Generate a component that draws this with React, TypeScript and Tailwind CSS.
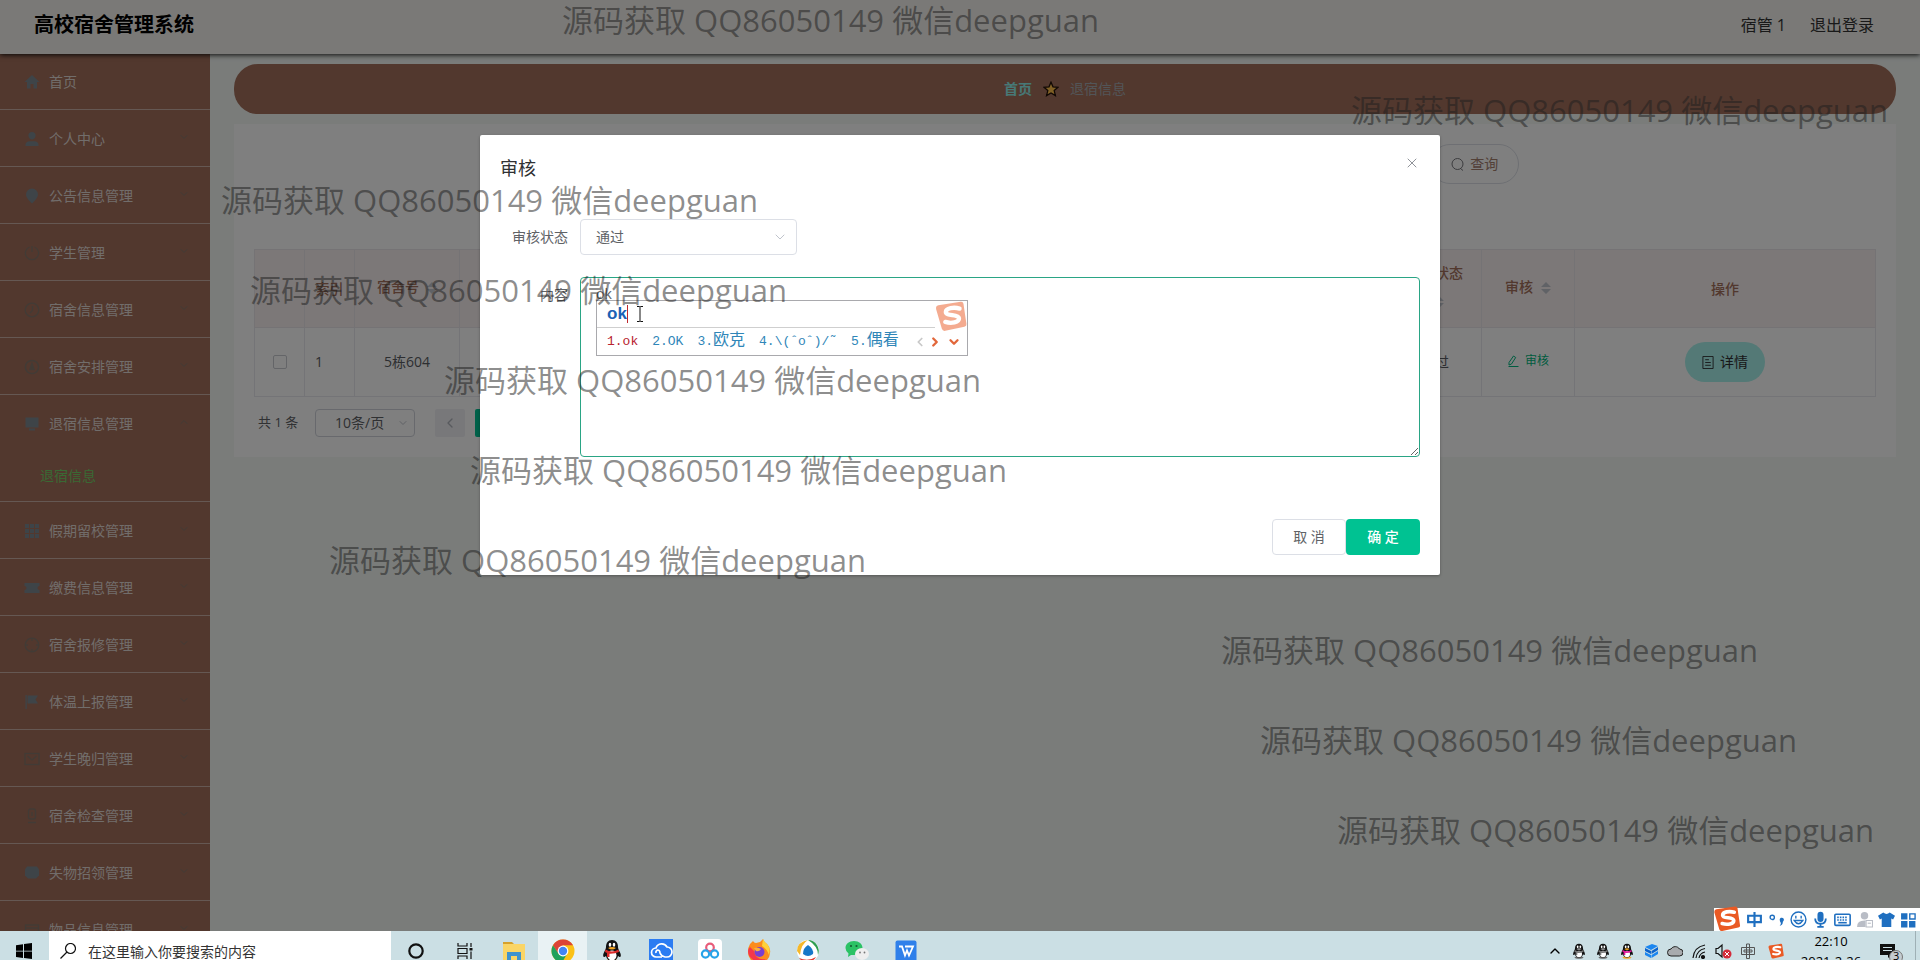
import React from "react";
import { ChevronDown, ChevronUp, ChevronLeft, ChevronRight, X } from "lucide-react";

type IconProps = { className?: string };

const menuIcons: Record<string, React.ReactNode> = {
  home: <path d="M8 1 0.5 8H3v6.500h3.500V10h3v4.500H13V8h2.500z" fill="currentColor" />,
  user: <path d="M8 1a3.600 3.600 0 0 1 3.600 3.600c0 2-1.600 4-3.600 4s-3.600-2-3.600-4A3.600 3.600 0 0 1 8 1zM1.500 15v-1.500c0-2 2-3.300 4-3.300h5c2 0 4 1.300 4 3.300V15z" fill="currentColor" />,
  pin: <path d="M8 .5a6 6 0 0 1 6 6c0 3.500-4 7-6 9-2-2-6-5.500-6-9a6 6 0 0 1 6-6z" fill="currentColor" />,
  power: (
    <g fill="none" stroke="currentColor" strokeWidth="1.300">
      <path d="M5.500 2A6.600 6.600 0 1 0 10.500 2" />
      <path d="M8 1v6" />
    </g>
  ),
  clock: (
    <g fill="none" stroke="currentColor" strokeWidth="1.300">
      <circle cx="8" cy="8" r="6.800" />
      <path d="M8.500 4v4.500L6 11" />
    </g>
  ),
  compass: (
    <g fill="none" stroke="currentColor" strokeWidth="1.500">
      <circle cx="8" cy="8" r="6.600" />
      <path d="M8 4.500 6 10.500h4z" fill="currentColor" />
    </g>
  ),
  monitor: <path d="M1.500 1.500h13v10h-13zM5 12.500h6v2H5z" fill="currentColor" />,
  grid: <path d="M1 1h4v4H1zM6 1h4v4H6zM11 1h4v4h-4zM1 6h4v4H1zM6 6h4v4H6zM11 6h4v4h-4zM1 11h4v4H1zM6 11h4v4H6zM11 11h4v4h-4z" fill="currentColor" />,
  ticket: <path d="M.5 3h15v3a2 2 0 0 0 0 4v3H.5v-3a2 2 0 0 0 0-4z" fill="currentColor" />,
  ball: (
    <g fill="none" stroke="currentColor" strokeWidth="1.300">
      <circle cx="8" cy="8" r="6.800" />
      <path d="M8 1v3M8 12v3M1 8h3M12 8h3" />
    </g>
  ),
  flag: <path d="M1.500 1h1.300v14H1.500zM3.500 1.500H14L11.500 5.500 14 9.500H3.500z" fill="currentColor" />,
  mail: (
    <g fill="none" stroke="currentColor" strokeWidth="1.300">
      <rect x="1" y="2.500" width="14" height="11" />
      <path d="M3.500 5 8 9l4.500-4" />
    </g>
  ),
  mic: (
    <g fill="none" stroke="currentColor" strokeWidth="1.300">
      <rect x="4.500" y="1" width="7" height="10" rx="2" />
      <path d="M4 14.500h8M8 4v4" />
    </g>
  ),
  chat: <path d="M3 1.500h10l2 3v6l-3 3H4l-3-3v-6z" fill="currentColor" />,
  goods: (
    <g fill="none" stroke="currentColor" strokeWidth="1.300">
      <rect x="1.500" y="3" width="13" height="11" />
      <path d="M1.500 6h13" />
    </g>
  ),
};

const menu = [
  { icon: "home", label: "首页", solid: true, leaf: true },
  { icon: "user", label: "个人中心", solid: true },
  { icon: "pin", label: "公告信息管理", solid: true },
  { icon: "power", label: "学生管理" },
  { icon: "clock", label: "宿舍信息管理" },
  { icon: "compass", label: "宿舍安排管理" },
  { icon: "monitor", label: "退宿信息管理", solid: true, child: "退宿信息" },
  { icon: "grid", label: "假期留校管理", solid: true },
  { icon: "ticket", label: "缴费信息管理", solid: true },
  { icon: "ball", label: "宿舍报修管理" },
  { icon: "flag", label: "体温上报管理", solid: true },
  { icon: "mail", label: "学生晚归管理" },
  { icon: "mic", label: "宿舍检查管理" },
  { icon: "chat", label: "失物招领管理", solid: true },
  { icon: "goods", label: "物品信息管理" },
];

function Sidebar() {
  return (
    <nav className="w-[210px] shrink-0 overflow-hidden bg-[#a4705c] text-sm text-[#e3dad6]">
      <ul>
        {menu.map((m) => (
          <li key={m.label} className="border-b border-[#cbb1a6]">
            <button type="button" className="flex h-14 w-full items-center pl-6 pr-5 pt-[2px]">
              <svg viewBox="0 0 16 16" className={m.solid ? "h-4 w-4 text-[#7c8890]" : "h-4 w-4 text-[#84776c]"}>
                {menuIcons[m.icon]}
              </svg>
              <span className="ml-[9px] flex-1 text-left">{m.label}</span>
              {!m.leaf &&
                (m.child ? (
                  <ChevronUp className="mb-1 h-3 w-3 text-[#84776c]" strokeWidth={2} />
                ) : (
                  <ChevronDown className="mb-1 h-3 w-3 text-[#84776c]" strokeWidth={2} />
                ))}
            </button>
            {m.child && (
              <a href="#checkout" className="flex h-[50px] items-center pl-10 text-[#74d268]">
                {m.child}
              </a>
            )}
          </li>
        ))}
      </ul>
    </nav>
  );
}

function SortCaret() {
  return (
    <svg viewBox="0 0 10 12" className="ml-2 inline-block h-3 w-[10px] align-[-2px] text-[#c0c4cc]">
      <path d="M5 0 10 5H0zM5 12 0 7h10z" fill="currentColor" />
    </svg>
  );
}

function DataTable() {
  return (
    <table className="w-full table-fixed border-collapse text-center text-sm text-[#5a5d63]">
      <colgroup>
        <col className="w-[50px]" />
        <col className="w-[50px]" />
        <col className="w-[105px]" />
        <col />
        <col className="w-[93px]" />
        <col className="w-[93px]" />
        <col className="w-[301px]" />
      </colgroup>
      <thead>
        <tr className="h-[78px] bg-[#f9f0f1] text-[#a4705c] [&>th]:border [&>th]:border-[#ebe6ea] [&>th]:font-medium">
          <th></th>
          <th>索引</th>
          <th className="whitespace-nowrap pb-1">
            宿舍号
            <SortCaret />
          </th>
          <th></th>
          <th className="px-4 pb-1 leading-7">
            审核状态
            <SortCaret />
          </th>
          <th className="whitespace-nowrap pb-1">
            审核
            <SortCaret />
          </th>
          <th>操作</th>
        </tr>
      </thead>
      <tbody>
        <tr className="h-[69px] [&>td]:border [&>td]:border-[#e9e9ee]">
          <td>
            <input type="checkbox" aria-label="选择第 1 行" className="mx-auto block h-[14px] w-[14px] appearance-none rounded-xs border border-[#c8cad0] bg-white" />
          </td>
          <td className="pl-[10px] text-left">1</td>
          <td>5栋604</td>
          <td></td>
          <td>通过</td>
          <td>
            <button type="button" className="inline-flex items-center gap-[6px] text-xs text-[#00b880]">
              <svg viewBox="0 0 12 12" className="h-3 w-3" fill="none" stroke="currentColor">
                <path d="M2 7.500 6.500 1l2.200 1.500L4.500 9 2 10zM1.500 11.500h10" />
              </svg>
              审核
            </button>
          </td>
          <td>
            <button type="button" className="inline-flex h-10 items-center gap-[6px] rounded-full bg-[#a9f2ec] px-[17px] text-[#303133]">
              <svg viewBox="0 0 12 14" className="h-[13px] w-3" fill="none" stroke="currentColor">
                <path d="M.5.500h11v13H.5zM3 4h4M3 7h6M3 10h6" />
              </svg>
              详情
            </button>
          </td>
        </tr>
      </tbody>
    </table>
  );
}

function Page() {
  return (
    <main className="min-w-0 flex-1 bg-[#f4f8f5] px-6 pt-[11px]">
      <div className="flex h-[50px] items-center justify-center gap-[11px] rounded-3xl bg-[#a4705c] text-sm">
        <a href="#home" className="font-bold text-[#8ff0ec]">首页</a>
        <svg viewBox="0 0 16 16" className="h-4 w-4">
          <path d="M8 1.200 10 5.800l5 .5-3.800 3.300 1.200 5L8 12l-4.400 2.600 1.200-5L1 6.300l5-.5z" fill="#ffc04a" stroke="#201008" strokeWidth="1.300" />
        </svg>
        <span className="text-[#a4abb0]">退宿信息</span>
      </div>
      <section className="mt-[10px] bg-white p-5">
        <div className="flex justify-end pr-[22%]">
          <button type="button" className="flex h-10 items-center gap-[6px] rounded-full border border-[#dcdfe6] px-5 text-sm text-[#a4806f]">
            <svg viewBox="0 0 13 13" className="h-[13px] w-[13px]" fill="none" stroke="#77777c">
              <circle cx="6.500" cy="6" r="5.500" />
              <path d="M9.500 10.500 12 12.500" />
            </svg>
            查询
          </button>
        </div>
        <div className="mt-[65px]">
          <DataTable />
        </div>
        <div className="mt-3 flex h-7 items-center text-[13px] text-[#606266]">
          <span className="ml-1 w-[57px]">共 1 条</span>
          <label className="relative">
            <select aria-label="每页条数" className="h-7 w-[100px] appearance-none rounded-sm border border-[#d0d3da] bg-transparent pl-[19px] text-sm">
              <option>10条/页</option>
            </select>
            <ChevronDown className="absolute right-[6px] top-2 h-3 w-3 text-[#c0c4cc]" />
          </label>
          <button type="button" aria-label="上一页" className="ml-5 flex h-7 w-[30px] items-center justify-center rounded-xs bg-[#f1f1f5] text-[#b0b4bc]">
            <ChevronLeft className="h-4 w-4" />
          </button>
          <button type="button" className="ml-[10px] h-7 w-[30px] rounded-xs bg-[#00c292] text-white">1</button>
        </div>
      </section>
    </main>
  );
}

function SogouLogo({ className }: IconProps) {
  return (
    <svg viewBox="0 0 28 28" className={className}>
      <path d="M3 4.500 22.500 1.500q2-.3 2.400 1.800L27.500 21q.3 2-1.800 2.400L9 27q-2.300.4-3-1.800L1 8q-.6-3 2-3.500z" fill="#ea5a24" />
      <path d="M21.500 7.500c-5-1.500-12-.5-12 3 0 4 11 1.500 11.500 5.500.3 3.800-7 4.800-12 3.200" fill="none" stroke="#fff" strokeWidth="3.800" strokeLinecap="round" />
    </svg>
  );
}

function ImePopup() {
  return (
    <div className="absolute left-4 top-[23px] flex h-14 w-[372px] flex-col border border-[#a9a9ad] bg-white">
      <div className="mr-8 flex h-[27px] shrink-0 items-center border-b border-[#cfcfcf] pl-[10px] font-['Liberation_Sans',sans-serif] text-[17px] font-bold text-[#1a62b5]">
        ok
        <span className="h-[18px] w-px bg-[#c0282d]" />
        <svg viewBox="0 0 8 16" className="ml-2 h-4 w-2" fill="none" stroke="#111">
          <path d="M1 .5h2.500l.5.500.5-.5H7M1 15.500h2.500L4 15l.5.500H7M4 1v14" />
        </svg>
      </div>
      <div className="flex flex-1 items-center gap-[14px] whitespace-nowrap pl-[10px] font-['Liberation_Mono','Noto_Sans_CJK_SC',monospace] text-[13px] leading-5 text-[#2f86b8]">
        <span className="text-[#b8232f]">1.ok</span>
        <span>2.OK</span>
        <span>3.<span className="text-base leading-5">欧克</span></span>
        <span>4.\(ˆoˆ)/˜</span>
        <span>5.<span className="text-base leading-5">偶看</span></span>
        <span className="flex gap-px">
          <ChevronLeft className="h-[14px] w-[14px] text-[#c8c8c8]" strokeWidth={3} />
          <ChevronRight className="h-[14px] w-[14px] text-[#e2673b]" strokeWidth={4} />
          <ChevronDown className="ml-1 h-[14px] w-[14px] text-[#e2673b]" strokeWidth={4} />
        </span>
      </div>
      <SogouLogo className="absolute -top-px right-0 h-8 w-8 opacity-50" />
    </div>
  );
}

function ReviewDialog() {
  return (
    <div className="absolute inset-0 z-10 flow-root bg-black/50">
      <div role="dialog" aria-labelledby="dialog-title" className="mx-auto mt-[135px] w-1/2 rounded-xs bg-white text-sm text-[#606266] shadow-[0_1px_3px_rgba(0,0,0,0.3)]">
        <div className="flex items-start justify-between px-5 pt-5">
          <h2 id="dialog-title" className="pt-px text-lg leading-6 text-[#303133]">审核</h2>
          <button type="button" aria-label="关闭" className="text-[#909399]">
            <X className="h-4 w-4" strokeWidth={1.500} />
          </button>
        </div>
        <form className="px-5 pt-[39px]" onSubmit={(e) => e.preventDefault()}>
          <div className="flex">
            <label htmlFor="status" className="w-20 pr-3 text-right leading-9">审核状态</label>
            <div className="relative">
              <select id="status" className="h-9 w-[217px] appearance-none rounded-sm border border-[#dcdfe6] bg-white pl-[15px] text-sm">
                <option>通过</option>
              </select>
              <ChevronDown className="pointer-events-none absolute right-[9px] top-[10px] h-4 w-4 text-[#c0c4cc]" strokeWidth={1.500} />
            </div>
          </div>
          <div className="mt-[22px] flex">
            <label htmlFor="content" className="w-20 pr-3 text-right leading-9">内容</label>
            <div className="relative flex-1">
              <textarea id="content" defaultValue="ok" className="block h-[180px] w-full rounded-sm border border-[#2aa585] px-[15px] py-[5px] leading-[21px] outline-none" />
              <ImePopup />
            </div>
          </div>
          <div className="mt-[62px] flex justify-end pb-5">
            <button type="button" className="h-9 w-[74px] rounded-sm border border-[#dcdfe6] bg-white">取 消</button>
            <button type="submit" className="h-9 w-[74px] rounded-sm bg-[#00c292] font-medium text-white">确 定</button>
          </div>
        </form>
      </div>
    </div>
  );
}

const marks = [
  "left-[562px] top-0",
  "left-[1351px] top-[90px]",
  "left-[221px] top-[180px]",
  "left-[250px] top-[270px]",
  "left-[444px] top-[360px]",
  "left-[470px] top-[450px]",
  "left-[329px] top-[540px]",
  "left-[1221px] top-[630px]",
  "left-[1260px] top-[720px]",
  "left-[1337px] top-[810px]",
];

function Watermarks() {
  return (
    <div className="pointer-events-none absolute inset-0 z-20 overflow-hidden font-['Open_Sans','Noto_Sans_CJK_SC',sans-serif] text-[31px] leading-10 text-[#1e1e1e]/52">
      {marks.map((m) => (
        <span key={m} className={`absolute whitespace-nowrap ${m}`}>源码获取 QQ86050149 微信deepguan</span>
      ))}
    </div>
  );
}

function ImeToolbar() {
  return (
    <div className="absolute bottom-0 right-0 z-30 flex h-[23px] items-center gap-[5px] bg-white pl-8 pr-[3px] text-[#1f6fc0]">
      <SogouLogo className="absolute -left-px -top-[3px] h-[27px] w-[28px]" />
      <svg viewBox="0 0 16 16" className="h-[17px] w-[17px]" fill="none" stroke="currentColor" strokeWidth="2">
        <path d="M2 4.500h12v6H2zM8 1v14" />
      </svg>
      <svg viewBox="0 0 16 16" className="h-[17px] w-[17px]">
        <circle cx="4" cy="6" r="2" fill="none" stroke="currentColor" strokeWidth="1.300" />
        <path d="M11 8a2 2 0 1 1 3 2q0 3-3 4 1.500-2 1-3-1-1-1-3z" fill="currentColor" />
      </svg>
      <svg viewBox="0 0 16 16" className="h-[17px] w-[17px]" fill="none" stroke="currentColor" strokeWidth="1.300">
        <circle cx="8" cy="8" r="7" />
        <path d="M4 9q4 6 8 0zM5.500 4.500v2.500M10.500 4.500v2.500" />
      </svg>
      <svg viewBox="0 0 16 16" className="h-[17px] w-[17px]" fill="none" stroke="currentColor" strokeWidth="1.700">
        <rect x="6" y="1.500" width="4" height="8" rx="2" fill="currentColor" />
        <path d="M3 7q0 5 5 5t5-5M8 12v3M5 15h6" />
      </svg>
      <svg viewBox="0 0 16 16" className="h-[17px] w-[17px]" fill="none" stroke="currentColor" strokeWidth="1.500">
        <rect x=".8" y="3" width="14.400" height="10.500" rx="1" />
        <path d="M3 6h10M3 8.500h10" strokeDasharray="1.500 1" />
        <path d="M4 11h8" />
      </svg>
      <svg viewBox="0 0 16 16" className="h-[17px] w-[17px]" fill="#b9bdc6">
        <circle cx="8" cy="4.500" r="3.500" />
        <path d="M1 15q0-6 7-6h1v6z" />
        <path d="M9.500 9h6v6h-6z" fill="#fff" stroke="#b9bdc6" />
        <path d="M11 11h3v1h-3z" />
      </svg>
      <svg viewBox="0 0 16 16" className="h-[17px] w-[17px]">
        <path d="M5 1.500q3 2.500 6 0l5 3-1.800 3.500L12.500 7v8h-9V7l-1.700 1L0 4.500z" fill="currentColor" />
      </svg>
      <svg viewBox="0 0 16 16" className="h-[17px] w-[17px]">
        <path d="M1 2h6v6H1zM1 9.500h6v6H1zM8.500 9.500h6v6h-6z" fill="currentColor" />
        <path d="M9.200 2.700h5v4.800h-5z" fill="none" stroke="currentColor" strokeWidth="1.300" />
      </svg>
    </div>
  );
}

function Penguin({ className, scarf = "#d92a2a", body = "#111" }: IconProps & { scarf?: string; body?: string }) {
  return (
    <svg viewBox="0 0 24 24" className={className}>
      <path d="M5 22q2-2 7-2t7 2q-3 2-7 1.500Q8 24 5 22z" fill={scarf === "#777" ? "#666" : "#f5a623"} />
      <path d="M12 1c4 0 6 3 6 7 0 2 1 3 2.500 6.500.8 2.200 0 4-1 3.500L18 17q-1 5-6 5t-6-5l-1.500 1c-1 .5-1.800-1.300-1-3.500C5 11 6 10 6 8c0-4 2-7 6-7z" fill={body} />
      <ellipse cx="12" cy="16.500" rx="4.500" ry="5" fill="#fff" />
      <ellipse cx="10" cy="5.800" rx="1.300" ry="2" fill="#fff" />
      <ellipse cx="14" cy="5.800" rx="1.300" ry="2" fill="#fff" />
      <path d="M8 9q4-2 8 0-4 3-8 0z" fill={scarf === "#777" ? "#999" : "#f5a623"} />
      <path d="M5.500 10.500q6.500 4 13 0l.5 2.500q-4 2-9.500 1.800V18H7v-4l-2-1z" fill={scarf} />
    </svg>
  );
}

const taskApps: { name: string; active?: boolean; icon: React.ReactNode }[] = [
  {
    name: "文件资源管理器",
    icon: (
      <g>
        <path d="M1 3h9l2 2H1z" fill="#d6a12c" />
        <path d="M1 5h22v17H1z" fill="#fad566" />
        <path d="M5 13h14v9h-4v-5H9v5H5z" fill="#3f93cf" />
      </g>
    ),
  },
  {
    name: "Chrome",
    active: true,
    icon: (
      <g>
        <circle cx="12" cy="12" r="11.500" fill="#fbc116" />
        <path d="M2 6.300A11.500 11.500 0 0 1 22 6.300H12L7.500 15z" fill="#dc4437" />
        <path d="M2 6.300A11.500 11.500 0 0 0 11 23.500l5-8.500-8 .5z" fill="#1fa15d" />
        <circle cx="12" cy="12" r="5.400" fill="#fff" />
        <circle cx="12" cy="12" r="4.200" fill="#4285f4" />
      </g>
    ),
  },
  { name: "QQ", icon: null },
  {
    name: "云盘",
    icon: (
      <g>
        <path d="M0 0h24v24H0z" fill="#2b7cf2" />
        <path d="M13 18H7a4.500 4.500 0 0 1 0-9 6 6 0 0 1 11-1 5 5 0 0 1 0 10h-2q-4-1-5-4 0-3-2.500-3-2 1-1.500 3" fill="none" stroke="#fff" strokeWidth="1.700" />
      </g>
    ),
  },
  {
    name: "百度网盘",
    icon: (
      <g fill="none" strokeWidth="2.200">
        <rect width="24" height="24" rx="4" fill="#fff" />
        <circle cx="12" cy="8.500" r="3.800" stroke="#e85c7a" />
        <circle cx="7.500" cy="15" r="3.600" stroke="#27a3e8" />
        <circle cx="16.500" cy="15" r="3.600" stroke="#27a3e8" />
      </g>
    ),
  },
  {
    name: "Firefox",
    icon: (
      <g>
        <path d="M3 5q2-2 3-3 1 2 3 2l4-1 3-3q1 3 4 5 4 4 3 9A11 11 0 0 1 1 13Q1 8 3 5z" fill="#fb8c1e" />
        <path d="M16 0q1 3 4 5 4 4 2 11-2-6-7-9z" fill="#ffd23a" />
        <path d="M1 12a11 11 0 0 0 18 8q-10 2-12-8L3 8q-2 2-2 4z" fill="#f5384a" />
        <circle cx="12.500" cy="13" r="5" fill="#7a3fd0" />
        <path d="M7 9q4-1 7 1-2 3-5 2z" fill="#fbb03b" />
      </g>
    ),
  },
  {
    name: "浏览器",
    icon: (
      <g>
        <circle cx="12" cy="12" r="11" fill="#fff" />
        <path d="M12 1a11 11 0 0 1 10 15q0-9-10-15z" fill="#2f9e4f" />
        <path d="M1 12Q1 3 12 1 5 5 4 16z" fill="#f5b82a" />
        <path d="M3 19q9 4 17-1-3 5-9 5-5 0-8-4z" fill="#e23c30" />
        <path d="M12 6q6 4 5 9-5 4-10 0 0-6 5-9z" fill="#1678c8" />
      </g>
    ),
  },
  {
    name: "微信",
    icon: (
      <g>
        <path d="M9 2c5 0 8.500 3 8.500 7s-3.500 7-8.500 7l-3 0-3 2 .5-3.500Q.5 12 .5 9C.5 5 4 2 9 2z" fill="#2bc265" />
        <ellipse cx="17" cy="15" rx="7" ry="6" fill="#eee" />
        <circle cx="6" cy="7" r="1.100" fill="#145c32" />
        <circle cx="11.500" cy="7" r="1.100" fill="#145c32" />
        <circle cx="15" cy="13.500" r=".9" fill="#777" />
        <circle cx="19.500" cy="13.500" r=".9" fill="#777" />
      </g>
    ),
  },
  {
    name: "WPS",
    icon: (
      <g>
        <rect x="1.500" y="1.500" width="21" height="22" rx="2" fill="#2f80ea" />
        <path d="M5 7.500h3l3 9 2-5 2 5 4-9h-8" fill="none" stroke="#fff" strokeWidth="1.800" />
      </g>
    ),
  },
];

function Taskbar() {
  return (
    <footer className="relative z-30 h-[29px] shrink-0 overflow-hidden bg-[#cbdfe4] text-black">
      <div className="flex h-10 items-center">
        <button type="button" aria-label="开始" className="flex h-10 w-12 items-center justify-center">
          <svg viewBox="0 0 16 16" className="h-4 w-4">
            <path d="M0 2.200 7 1.200v6.500H0zM8 1l8-1v7.700H8zM0 8.500h7V15l-7-1zM8 8.500h8V16l-8-1z" />
          </svg>
        </button>
        <label className="ml-px flex h-10 w-[342px] items-center bg-white pl-[11px]">
          <svg viewBox="0 0 16 16" className="h-4 w-4" fill="none" stroke="#111" strokeWidth="1.200">
            <circle cx="10.500" cy="5.500" r="5" />
            <path d="M7 9 .5 15.500" />
          </svg>
          <input aria-label="搜索" placeholder="在这里输入你要搜索的内容" className="ml-3 w-60 bg-transparent pt-[2px] text-sm outline-none placeholder:text-[#333]" />
        </label>
        <button type="button" aria-label="Cortana" className="flex h-10 w-[50px] items-center justify-center">
          <svg viewBox="0 0 16 16" className="h-4 w-4" fill="none" stroke="#111" strokeWidth="2.200">
            <circle cx="8" cy="8" r="6.700" />
          </svg>
        </button>
        <button type="button" aria-label="任务视图" className="flex h-10 w-12 items-center justify-center">
          <svg viewBox="0 0 16 16" className="h-4 w-4" fill="none" stroke="#111" strokeWidth="1.200">
            <path d="M1 0v3h9V0M1 5.500h9v5H1zM1 16v-3h9v3M14 0v4M14 8.500V16" />
            <path d="M12.500 5h3v2.500h-3z" fill="#111" stroke="none" />
          </svg>
        </button>
        <div className="flex">
          {taskApps.map((a) => (
            <button key={a.name} type="button" aria-label={a.name} className={a.active ? "flex h-10 w-[49px] items-center justify-center bg-[#e9f2f4]" : "flex h-10 w-[49px] items-center justify-center"}>
              {a.icon ? <svg viewBox="0 0 24 24" className="h-6 w-6">{a.icon}</svg> : <Penguin className="h-6 w-6" />}
            </button>
          ))}
        </div>
        <div className="ml-auto flex items-center gap-2">
          <ChevronUp className="h-4 w-4" strokeWidth={2} />
          <Penguin className="h-4 w-4" scarf="#777" />
          <Penguin className="h-4 w-4" scarf="#777" />
          <Penguin className="h-4 w-4" scarf="#e0189b" />
          <svg viewBox="0 0 16 16" className="h-4 w-4">
            <path d="M2 4 9 1l6 2-7 4z" fill="#1b86f0" />
            <path d="m2 5 6 3v3L2 8zM8.500 8 15 4v3l-6.500 4z" fill="#0c63cc" />
            <path d="m2 9 6 3v3l-6-3zM8.500 12 15 8v3l-6.500 4z" fill="#1b86f0" />
          </svg>
          <svg viewBox="0 0 16 16" className="h-4 w-4">
            <path d="M4 13a3.500 3.500 0 0 1 0-7 5 5 0 0 1 8.500 0 3.500 3.500 0 0 1 0 7z" fill="#a8abae" stroke="#222" />
          </svg>
          <svg viewBox="0 0 16 16" className="h-4 w-4" fill="none" stroke="#111" strokeWidth="1.200">
            <path d="M2 15Q3 4 14 2M5 15q1-8 9-9.500M8 15q1-5 6-6" />
            <circle cx="12" cy="14" r="1.500" fill="#111" />
          </svg>
          <svg viewBox="0 0 17 16" className="h-4 w-[17px]">
            <path d="M1 5.500h2L7 2v12l-4-3.500H1z" fill="none" stroke="#111" strokeWidth="1.200" />
            <circle cx="12" cy="11" r="4.500" fill="#d42a3a" />
            <path d="m10 9 4 4M14 9l-4 4" stroke="#fff" />
          </svg>
          <svg viewBox="0 0 16 16" className="h-4 w-4" fill="none" stroke="#555" strokeWidth="1">
            <path d="M1.500 4.500h13v7h-13zM4 7h8v2H4zM6.500 1h3v14.500h-3z" />
          </svg>
          <SogouLogo className="ml-1 h-4 w-4" />
          <time className="w-[78px] self-start text-center text-[13px] leading-5">
            22:10
            <br />
            2021-2-26
          </time>
          <svg viewBox="0 0 24 20" className="ml-px h-5 w-6">
            <path d="M1 3h15v11h-4l-3 3v-3H1z" fill="#111" />
            <path d="M4 6.500h9M4 9.500h9" stroke="#cbdfe4" />
            <circle cx="17" cy="16" r="6.500" fill="#c4ccd0" stroke="#777" />
            <text x="14" y="19" fontSize="11" fontFamily="Open Sans">3</text>
          </svg>
          <span className="ml-1 mr-1 h-10 w-px bg-[#9fb0b5]" />
        </div>
      </div>
    </footer>
  );
}

export default function App() {
  return (
    <div className="flex h-screen flex-col overflow-hidden font-['Open_Sans','Noto_Sans_CJK_SC',sans-serif]">
      <div className="relative min-h-0 flex-1 overflow-hidden">
        <div className="flex h-full flex-col">
          <header className="relative z-1 flex h-[53px] shrink-0 items-center justify-between bg-[#f4f2ee] pb-[3px] pl-[34px] pr-[46px] shadow-[0_1px_0_#f4f2ee,0_2px_5px_rgba(0,0,0,0.9)]">
            <h1 className="text-xl font-bold text-black">高校宿舍管理系统</h1>
            <div className="flex gap-6 text-base text-[#333]">
              <span>宿管 1</span>
              <button type="button">退出登录</button>
            </div>
          </header>
          <div className="flex min-h-0 flex-1">
            <Sidebar />
            <Page />
          </div>
        </div>
        <ReviewDialog />
        <ImeToolbar />
      </div>
      <Watermarks />
      <Taskbar />
    </div>
  );
}
